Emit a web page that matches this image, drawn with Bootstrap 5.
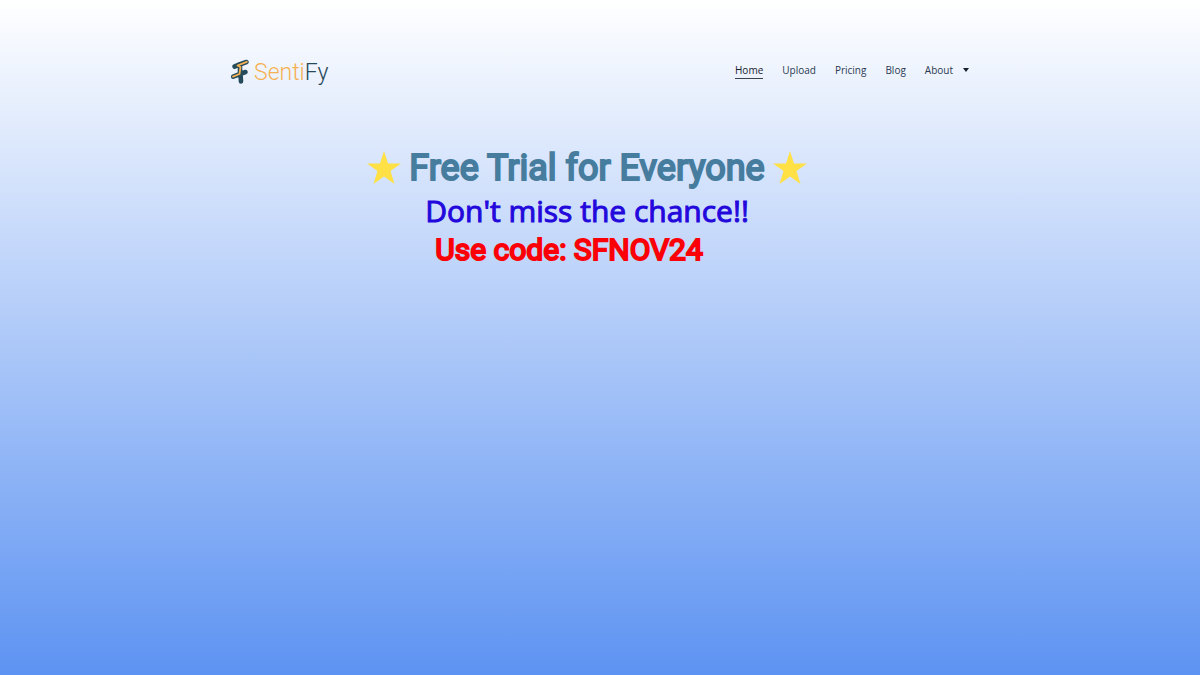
<!DOCTYPE html>
<html lang="en">
<head>
<meta charset="utf-8">
<meta name="viewport" content="width=device-width, initial-scale=1">
<title>SentiFy</title>
<link href="https://cdn.jsdelivr.net/npm/bootstrap@5.3.0/dist/css/bootstrap.min.css" rel="stylesheet">
<style>
  body {
    font-family: "Open Sans", sans-serif;
    background: linear-gradient(#fff, #5d93f2) no-repeat;
  }
  .page { max-width: 740px; }
  .site-header { padding-top: 58px; }
  .brand { font-family: Roboto, sans-serif; font-weight: 300; font-size: 23px; line-height: 26px; color: #264858; }
  .brand-name { padding-top: 2px; }
  .brand-warm { color: #f6b152; }
  .site-nav { font-size: 10px; line-height: 14px; gap: 19px; padding: 0 1px 2px 0; }
  .site-nav .nav-link { padding: 0 0 1px; color: #2b3a52; border-bottom: 1px solid transparent; }
  .site-nav .nav-link.active { color: #16202e; border-color: #3a4250; }
  .site-nav .dropdown-toggle::after { border-width: 4px 3px 0; margin-left: 10px; vertical-align: 2px; color: #16202e; }
  .promo { padding-top: 59px; padding-right: 26px; }
  .promo-title, .promo-code { font-family: Roboto, sans-serif; font-weight: 400; -webkit-text-stroke: 2px; }
  .promo-title { font-size: 36px; line-height: 46px; color: #467c9d; }
  .promo-lead { font-size: 30px; line-height: 40px; color: #2308dc; -webkit-text-stroke: 1px; }
  .promo-code { font-size: 30px; line-height: 38px; color: #fb0007; padding-right: 36px; }
</style>
</head>
<body class="min-vh-100">
<div class="container page p-0">
  <header class="site-header d-flex align-items-center justify-content-between">
    <a class="brand d-flex align-items-center text-decoration-none" href="#">
      <svg width="20" height="28" viewBox="0 0 20 28" class="me-1" aria-hidden="true" fill="none" stroke-linecap="round" stroke-linejoin="round">
        <path d="M16.500 4 8 7 10 8.500V16L3.200 18.600M4.500 8.500 15 4.500M10 16 15.500 14M10.500 16 11 23.500" stroke="#264b5b" stroke-width="4.600"/>
        <path d="M16.800 3.800 7.500 7.500 10.500 9 9.500 16 3 18.600" stroke="#f6b152" stroke-width="1.800"/>
      </svg>
      <span class="brand-name"><span class="brand-warm">Senti</span>Fy</span>
    </a>
    <nav aria-label="Main">
      <ul class="nav site-nav">
        <li class="nav-item"><a class="nav-link active" aria-current="page" href="#">Home</a></li>
        <li class="nav-item"><a class="nav-link" href="#">Upload</a></li>
        <li class="nav-item"><a class="nav-link" href="#">Pricing</a></li>
        <li class="nav-item"><a class="nav-link" href="#">Blog</a></li>
        <li class="nav-item dropdown">
          <a class="nav-link dropdown-toggle" href="#" role="button" data-bs-toggle="dropdown" aria-expanded="false">About</a>
          <ul class="dropdown-menu"><li><a class="dropdown-item" href="#">About</a></li></ul>
        </li>
      </ul>
    </nav>
  </header>
  <main class="promo text-center">
    <h1 class="promo-title m-0 d-flex justify-content-center align-items-center">
      <svg width="34" height="34" viewBox="0 0 34 34" aria-hidden="true"><path fill="#ffe045" d="M17 0 21 12.500H34L23.500 20 27.500 33 17 25.500 6.500 33 10.500 20 0 12.500H13Z"/></svg>
      <span class="mx-2">Free Trial for Everyone</span>
      <svg width="34" height="34" viewBox="0 0 34 34" aria-hidden="true"><path fill="#ffe045" d="M17 0 21 12.500H34L23.500 20 27.500 33 17 25.500 6.500 33 10.500 20 0 12.500H13Z"/></svg>
    </h1>
    <p class="promo-lead m-0">Don't miss the chance!!</p>
    <p class="promo-code m-0">Use code: SFNOV24</p>
  </main>
</div>
<script src="https://cdn.jsdelivr.net/npm/bootstrap@5.3.0/dist/js/bootstrap.bundle.min.js"></script>
</body>
</html>
